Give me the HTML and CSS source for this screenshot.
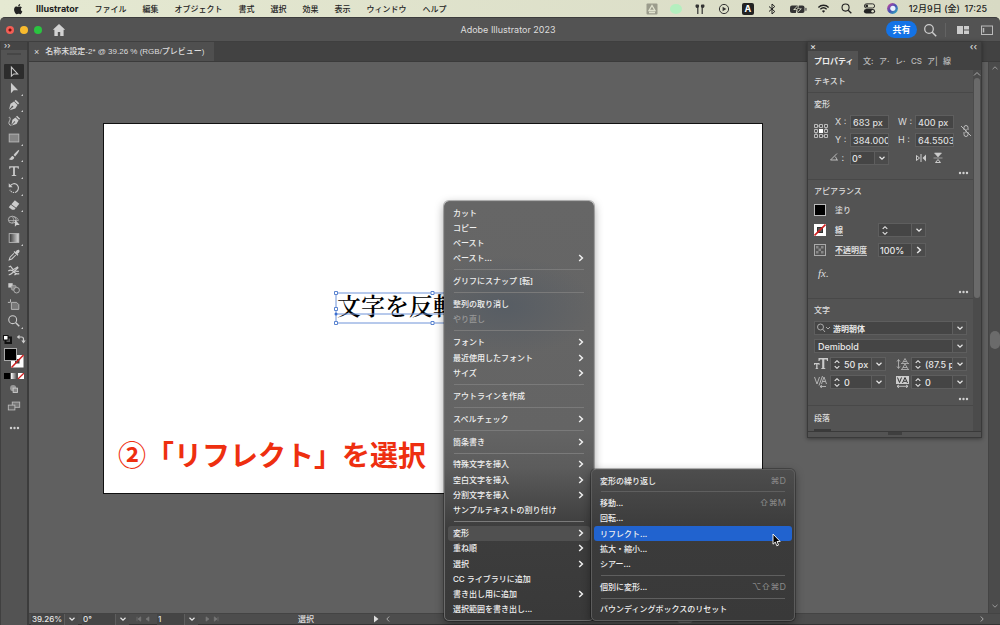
FILE: index.html
```html
<!DOCTYPE html>
<html lang="ja">
<head>
<meta charset="utf-8">
<title>Adobe Illustrator 2023</title>
<link rel="stylesheet" href="styles.css">
</head>
<body>
<svg class="defs" aria-hidden="true">
  <symbol id="chev-down" viewBox="0 0 8 8"><path d="M1.5 2.8 4 5.2 6.5 2.8" fill="none" stroke="currentColor" stroke-width="1.2"/></symbol>
  <symbol id="chev-right" viewBox="0 0 8 8"><path d="M2.2 1 5.4 4 2.2 7" fill="none" stroke="currentColor" stroke-width="1.5"/></symbol>
  <symbol id="stepper" viewBox="0 0 8 12"><path d="M1.5 4.2 4 1.8 6.5 4.2M1.5 7.8 4 10.2 6.5 7.8" fill="none" stroke="currentColor" stroke-width="1.2"/></symbol>
  <symbol id="dots" viewBox="0 0 12 4"><circle cx="2.2" cy="2" r="1.3" fill="currentColor"/><circle cx="6" cy="2" r="1.3" fill="currentColor"/><circle cx="9.8" cy="2" r="1.3" fill="currentColor"/></symbol>
</svg>

<header class="menubar">
  <nav class="menubar-items">
    <svg class="apple" viewBox="0 0 16 16"><path d="M11.8 8.4c0-1.6 1.3-2.3 1.4-2.4-.8-1.1-2-1.3-2.400-1.300-1-.1-2 .6-2.500.600s-1.300-.6-2.200-.6C4.900 4.700 3.900 5.400 3.300 6.300 2.100 8.400 3 11.500 4.200 13.200c.6.800 1.200 1.700 2.100 1.700s1.200-.5 2.200-.5 1.300.5 2.200.5 1.500-.8 2.100-1.700c.6-.900.9-1.800.9-1.900-.1 0-1.900-.7-1.900-2.900zM10.200 3.600c.5-.6.800-1.400.7-2.200-.7 0-1.500.5-2 1-.400.500-.800 1.300-.7 2.100.8.1 1.500-.4 2-.9z" fill="#222"/></svg>
    <a class="app-name" href="#">Illustrator</a>
    <a href="#">ファイル</a><a href="#">編集</a><a href="#">オブジェクト</a><a href="#">書式</a><a href="#">選択</a><a href="#">効果</a><a href="#">表示</a><a href="#">ウィンドウ</a><a href="#">ヘルプ</a>
  </nav>
  <div class="tray">
    <svg class="ic" viewBox="0 0 14 14"><rect x="1.500" y="1.500" width="11" height="11" rx="1" fill="#9b9c8c"/><path d="M7 3.500 10 8.500H4zM4 10.500h6" fill="none" stroke="#e1e3ce" stroke-width="1.300"/></svg>
    <svg class="ic" viewBox="0 0 14 14"><ellipse cx="7" cy="7" rx="6" ry="5" fill="#b4efbf"/></svg>
    <svg class="ic" viewBox="0 0 14 14"><path d="M3 2.500h2.300c1 0 1 3 .1 3.200V12H4.200V6C2.600 6 2 3.500 3 2.500zM11 2.500H8.700c-1 0-1 3-.1 3.200V12h1.200V6c1.600 0 2.200-2.500 1.200-3.500z" fill="#333"/></svg>
    <svg class="ic" viewBox="0 0 14 14"><circle cx="7" cy="7" r="4.600" fill="none" stroke="#333"/><path d="M5.600 4.700 9.300 7 5.600 9.300z" fill="#333"/></svg>
    <span class="ime">A</span>
    <svg class="ic" viewBox="0 0 14 14"><path d="M4 4.500 9.800 9.500 7 12V2L9.800 4.500 4 9.500" fill="none" stroke="#222"/></svg>
    <svg class="ic battery" viewBox="0 0 18 14"><rect x="1" y="3.500" width="14.500" height="7.500" rx="2" fill="#333"/><rect x="16.300" y="5.800" width="1.300" height="3" rx=".6" fill="#555"/><path d="M10 2 4 8h3.500l-1 4.500L13 6.500H9.300z" fill="#dfe1cc"/><path d="M9.200 3.800 5.800 7.200h3l-.8 3.500L11.200 7H8.200z" fill="#222"/></svg>
    <svg class="ic n" viewBox="0 0 14 14"><path d="M1.500 5.800c3-3 8-3 11 0M3.600 7.900c2-1.900 4.800-1.900 6.800 0" fill="none" stroke="#222" stroke-width="1.500"/><path d="M5.300 9.600c1-.9 2.400-.9 3.400 0L7 11.500z" fill="#222"/></svg>
    <svg class="ic n" viewBox="0 0 14 14"><circle cx="6" cy="6" r="3.800" fill="none" stroke="#222" stroke-width="1.200"/><path d="m8.800 8.800 3.400 3.400" stroke="#222" stroke-width="1.400"/></svg>
    <svg class="ic n" viewBox="0 0 14 14"><rect x="1.500" y="2" width="11" height="4.500" rx="2.250" fill="none" stroke="#222"/><circle cx="4" cy="4.200" r="1.500" fill="#222"/><rect x="1" y="7.500" width="12" height="5" rx="2.500" fill="#222"/><circle cx="10.400" cy="10" r="1.400" fill="#dfe1cc"/></svg>
    <svg class="ic n" viewBox="0 0 14 14"><defs><linearGradient id="siri" x1="0" y1="0" x2="1" y2="1"><stop offset="0" stop-color="#d9459a"/><stop offset=".5" stop-color="#4650b5"/><stop offset="1" stop-color="#2cc3c1"/></linearGradient></defs><circle cx="7" cy="7" r="5.800" fill="url(#siri)"/><circle cx="7.400" cy="6.800" r="2.800" fill="#e9f2ff"/></svg>
    <time>12月9日 (金)&nbsp; 17:25</time>
  </div>
</header>

<main class="window">
  <div class="titlebar">
    <div class="lights"><i class="red"></i><i class="yellow"></i><i class="green"></i></div>
    <button class="plain home" aria-label="ホーム"><svg viewBox="0 0 14 14"><path d="M7 1 .8 6.800h1.600V13h3.400V9h2.400v4h3.400V6.800h1.600z" fill="#d2d2d2"/></svg></button>
    <h1>Adobe Illustrator 2023</h1>
    <div class="title-tools">
      <button class="share">共有</button>
      <button class="plain" aria-label="検索"><svg class="ti" viewBox="0 0 14 14"><circle cx="6" cy="6" r="4.300" fill="none" stroke="#ccc" stroke-width="1.300"/><path d="m9.200 9.200 4 4" stroke="#ccc" stroke-width="1.500"/></svg></button>
      <i class="vr"></i>
      <button class="plain" aria-label="レイアウト"><svg class="ti" viewBox="0 0 14 14"><path d="M1 3h6v8H1zM8 3h5v3.500H8zM8 7.500h5V11H8z" fill="#ccc"/></svg></button>
      <button class="plain" aria-label="ワークスペース"><svg class="ti" viewBox="0 0 14 14"><rect x="1.500" y="3" width="11" height="8.500" fill="none" stroke="#bbb"/><path d="M3.500 5v4.500" stroke="#bbb" stroke-width="1.500"/></svg></button>
    </div>
  </div>

  <div class="workspace">
    <aside class="toolbar">
      <div class="tool-head">››</div>
      <i class="grip"></i>
      <div class="tools">
        <button class="tool active more" aria-label="選択"><svg viewBox="0 0 16 16"><path d="M5 2.500v10.200l2.800-2.500h4.400z" fill="none" stroke="#ccc" stroke-width="1.200"/></svg></button>
        <button class="tool more" aria-label="ダイレクト選択"><svg viewBox="0 0 16 16"><path d="M4.500 2v12l3.200-3.300h5z" fill="#ccc"/></svg></button>
        <button class="tool more" aria-label="ペン"><svg viewBox="0 0 16 16"><path d="m10 2 4 4-1.400 1.400-4-4zM8 4l4 4-2.500 4L3 14l3-3.200a1 1 0 1 0-.8-.8L2.300 13 4 6.500z" fill="#ccc"/></svg></button>
        <button class="tool" aria-label="曲線"><svg viewBox="0 0 16 16"><path d="m11.500 2 3.500 3.500-1.200 1.200-3.500-3.500zM9.700 4l3.500 3.500-2.400 3.800L5.500 13l3-3.200a.8.800 0 1 0-.7-.7L5 12.300 6.200 6.500z" fill="#ccc"/><path d="M2 4c2-1 2 2 .8 4S2 13 5 13" fill="none" stroke="#ccc"/></svg></button>
        <button class="tool more" aria-label="長方形"><svg viewBox="0 0 16 16"><rect x="2.500" y="3.500" width="11" height="9" fill="#858585" stroke="#bbb"/></svg></button>
        <button class="tool more" aria-label="ブラシ"><svg viewBox="0 0 16 16"><path d="M14 2c-2 .5-5 4-6.500 6l1.700 1.600C11.500 7.500 14 4 14 2zM6.500 9C4.500 9 4.500 12 2 12.500 4 14.500 8 14 8.300 10.500z" fill="#ccc"/></svg></button>
        <button class="tool more" aria-label="文字ツール"><svg viewBox="0 0 16 16"><path d="M2.500 2.500h11v3h-1l-.5-1.600H9v8.600l1.600.4v.8H5.400v-.8l1.600-.4V3.900H4L3.500 5.500h-1z" fill="#ccc"/></svg></button>
        <button class="tool more" aria-label="回転"><svg viewBox="0 0 16 16"><path d="M3.500 6c1.500-3.200 6-4 8.300-1.300s1.200 6-1.300 7.800" fill="none" stroke="#ccc" stroke-width="1.300"/><path d="M10.500 12.500c-3 1.600-6.500 0-7.200-2.500" fill="none" stroke="#ccc" stroke-width="1.200" stroke-dasharray="1.500 1"/><path d="M2 2.500v4.500h4.500z" fill="#ccc"/></svg></button>
        <button class="tool more" aria-label="消しゴム"><svg viewBox="0 0 16 16"><path d="m9 2.500 5 4-3.500 4.500-5.500-4z" fill="#ccc"/><path d="m4.300 7.700 5.500 4L8.500 13.500H5.800L2 10.500z" fill="#ccc"/></svg></button>
        <button class="tool" aria-label="シェイプ形成"><svg viewBox="0 0 16 16"><ellipse cx="6" cy="6.500" rx="4.500" ry="4" fill="none" stroke="#bbb"/><path d="M2 7.500h11c0-2-2-4-5-4M6 3c2 2 2 5 0 7.500" fill="none" stroke="#aaa"/><path d="M9 6v8.500l2-2h3.500z" fill="#ccc"/></svg></button>
        <button class="tool more" aria-label="グラデーション"><svg viewBox="0 0 16 16"><defs><linearGradient id="gt"><stop stop-color="#333"/><stop offset="1" stop-color="#ddd"/></linearGradient></defs><rect x="2.500" y="3" width="11" height="10" fill="url(#gt)" stroke="#bbb"/></svg></button>
        <button class="tool" aria-label="スポイト"><svg viewBox="0 0 16 16"><path d="M8 6 3.500 10.500 2.500 13.500l3-1L10 8" fill="none" stroke="#ccc" stroke-width="1.200"/><path d="m7.500 4.500 1-1 1.300 1C11 2.500 13 1.500 14 2.500s0 2.800-2 4l1 1.300-1 1z" fill="#ccc"/></svg></button>
        <button class="tool" aria-label="シンボルスプレー"><svg viewBox="0 0 16 16"><path d="M2 3.500 4 2.500l3 4 5-3 .5 1-4 3.500 5 .5M1.500 8c2-1.500 5-1 7 1.500s4 2 5.500 1.500M2 12c2 1 4-2 6-3.500M8.500 12.500 11 11" fill="none" stroke="#ccc" stroke-width="1.400"/></svg></button>
        <button class="tool" aria-label="ブレンド"><svg viewBox="0 0 16 16"><rect x="1.500" y="2.500" width="5" height="5" fill="#ccc"/><rect x="5" y="5" width="5.500" height="5.500" rx="2" fill="#888" stroke="#aaa"/><circle cx="11" cy="10.500" r="3.200" fill="#555" stroke="#bbb"/></svg></button>
        <button class="tool" aria-label="アートボード"><svg viewBox="0 0 16 16"><path d="M4 1.500v3M1 5h3" stroke="#ccc"/><path d="M5 5h6l2.500 2.500V13H5z" fill="#777" stroke="#bbb"/></svg></button>
        <button class="tool more" aria-label="ズーム"><svg viewBox="0 0 16 16"><circle cx="6.500" cy="6.500" r="4.500" fill="none" stroke="#ccc" stroke-width="1.200"/><path d="m10 10 4 4" stroke="#ccc" stroke-width="1.600"/></svg></button>
      </div>
      <div class="swap-row">
        <svg viewBox="0 0 10 10"><rect x="3.500" y="3.500" width="5.500" height="5.500" fill="none" stroke="#111" stroke-width="2"/><rect x="1.500" y="1.500" width="4.500" height="4.500" fill="#fff" stroke="#111"/></svg>
        <svg viewBox="0 0 10 10"><path d="M3 3h2.500c1.300 0 2 .7 2 2v2" fill="none" stroke="#ccc" stroke-width="1.200"/><path d="M3.500.8V5.200L.8 3zM5.300 6.500h4.400L7.500 9.500z" fill="#ccc"/></svg>
      </div>
      <svg class="fill-stroke" viewBox="0 0 22 22"><rect x="8" y="8" width="12.500" height="12.500" fill="#fff"/><rect x="12" y="12" width="4.500" height="4.500" fill="#444"/><path d="M8.500 20.500 20.500 8" stroke="#d02020" stroke-width="1.500"/><rect x="1.500" y="1.500" width="12" height="12" fill="#000" stroke="#aaa"/></svg>
      <svg class="modes" viewBox="0 0 20 6"><defs><linearGradient id="gm"><stop stop-color="#fff"/><stop offset="1" stop-color="#444"/></linearGradient></defs><rect width="6" height="6" fill="#000"/><rect x="7" width="6" height="6" fill="url(#gm)"/><rect x="14" width="6" height="6" fill="#fff"/><path d="m14 6 6-6" stroke="#d02020" stroke-width="1.300"/></svg>
      <svg class="mode-ic" viewBox="0 0 16 16"><circle cx="7" cy="7" r="3.500" fill="#999"/><rect x="7" y="7" width="5" height="5" fill="#888" stroke="#ccc"/></svg>
      <svg class="mode-ic wide" viewBox="0 0 16 16"><rect x="6" y="3.500" width="8.500" height="6" fill="#777" stroke="#bbb"/><rect x="1.500" y="7" width="7.500" height="5.500" fill="#666" stroke="#bbb"/></svg>
      <svg class="dots tool-dots"><use href="#dots"/></svg>
    </aside>

    <section class="document">
      <div class="tabs"><button class="doc-tab"><span>×</span>名称未設定-2* @ 39.26 % (RGB/プレビュー)</button></div>
      <div class="stage">
        <div class="canvas">
          <div class="artboard">
            <div class="text-object">文字を反転
              <svg class="selection" viewBox="0 0 194 34"><path d="M2 2h190v30H2zM2 23h190" fill="none" stroke="#6f93d8"/><g fill="#fff" stroke="#5b84d0"><path d="M.5.500h3v3h-3zM.5 16.500h3v3h-3zM.5 30.500h3v3h-3zM97 .5h3v3h-3zM97 30.500h3v3h-3z"/></g><circle cx="2" cy="23" r="1.500" fill="#3d6fd0"/></svg>
            </div>
            <p class="callout">②「リフレクト」を選択</p>
          </div>
        </div>
        <div class="vscroll"><svg viewBox="0 0 8 8"><path d="M1.500 5.200 4 2.800l2.500 2.400" fill="none" stroke="#999"/></svg><i></i><svg class="end" viewBox="0 0 8 8"><path d="M1.500 2.800 4 5.200l2.500-2.400" fill="none" stroke="#999"/></svg></div>
      </div>
      <footer class="status">
        <div class="combo zoom"><input aria-label="ズーム率" value="39.26%"><button aria-label="ズーム一覧"><svg><use href="#chev-down"/></svg></button></div>
        <div class="combo angle"><input aria-label="回転角" value="0°"><button aria-label="角度一覧"><svg><use href="#chev-down"/></svg></button></div>
        <svg class="nav" viewBox="0 0 20 8"><path d="M2 1v6M7 1v6L3 4zM18 1v6l-4-3z" fill="#777" stroke="#777" stroke-width=".8"/></svg>
        <div class="combo page"><input aria-label="ページ" value="1"><button aria-label="ページ一覧"><svg><use href="#chev-down"/></svg></button></div>
        <svg class="nav" viewBox="0 0 20 8"><path d="M2 1v6l4-3zM13 1v6l4-3zM18 1v6" fill="#777" stroke="#777" stroke-width=".8"/></svg>
        <span class="status-text">選択</span>
        <svg class="play" viewBox="0 0 8 8"><path d="M2 .5v7L6.500 4z" fill="#ddd"/></svg>
        <div class="hscroll"><svg viewBox="0 0 8 8"><path d="M5.200 1.500 2.800 4l2.400 2.500" fill="none" stroke="#aaa"/></svg><i></i><svg viewBox="0 0 8 8"><path d="M2.800 1.500 5.200 4 2.800 6.500" fill="none" stroke="#aaa"/></svg></div>
      </footer>
    </section>

    <aside class="panel">
      <div class="panel-head"><span>×</span><span>‹‹</span></div>
      <div class="panel-tabs"><button class="on">プロパティ</button><button aria-label="文字スタイル">文:</button><button aria-label="アセット">ア·</button><button aria-label="レイヤー">レ·</button><button aria-label="CSS">CS</button><button aria-label="アピアランス">ア|</button><button>線</button></div>
      <div class="panel-body">
        <div class="panel-content">
          <section class="kind"><h2>テキスト</h2></section>
          <section>
            <h2>変形</h2>
            <div class="transform">
              <svg class="refpt" viewBox="0 0 14 14"><g fill="none" stroke="#bbb"><path d="M2 2h10v10H2z" stroke-dasharray="1 1"/><path d="M.5.500h3v3h-3zM5.500.500h3v3h-3zM10.500.500h3v3h-3zM.5 5.500h3v3h-3zM10.500 5.500h3v3h-3zM.5 10.500h3v3h-3zM5.500 10.500h3v3h-3zM10.500 10.500h3v3h-3z" fill="#535353"/></g><path d="M5 5h4v4H5z" fill="#fff"/></svg>
              <label for="x">X :</label><input id="x" value="683 px"><label class="second" for="w">W :</label><input id="w" value="400 px">
              <svg class="link" viewBox="0 0 12 14"><path d="M4 6V3.500a2 2 0 0 1 4 0V6M4 8v2.500a2 2 0 0 0 4 0V8M6 5v4M1 2l10 10" fill="none" stroke="#bbb"/></svg>
              <label for="y">Y :</label><input id="y" value="384.000"><label class="second" for="h">H :</label><input id="h" value="64.5503">
              <label class="ang" for="r"><svg viewBox="0 0 12 10"><path d="M8 1.500 1.500 8H9M6 4.500q2 1.500 1.500 3.500" fill="none" stroke="#bbb"/></svg>:</label>
              <div class="combo rot"><input id="r" value="0°"><button aria-label="角度"><svg><use href="#chev-down"/></svg></button></div>
              <div class="flips"><svg viewBox="0 0 12 12"><path d="M1.500 3.500v5L4.500 6zM6 2v8" fill="none" stroke="#ccc"/><path d="M11 2.500v7L7.500 6z" fill="#ccc"/></svg><svg viewBox="0 0 12 12"><path d="M2.500 1h7L6 5zM1.500 6h9" fill="#ccc" stroke="#ccc" stroke-width=".6"/><path d="M3.500 10.500h5L6 7.500z" fill="none" stroke="#ccc"/></svg></div>
            </div>
            <svg class="dots"><use href="#dots"/></svg>
          </section>
          <section class="appearance">
            <h2>アピアランス</h2>
            <div class="ap-row"><svg viewBox="0 0 12 12"><rect x=".5" y=".5" width="11" height="11" fill="#000" stroke="#bbb"/></svg><span>塗り</span></div>
            <div class="ap-row"><svg viewBox="0 0 12 12"><rect width="12" height="12" fill="#fff"/><rect x="3.500" y="3.500" width="5" height="5" fill="#555" stroke="#333"/><path d="M.5 11.500 11.500.5" stroke="#d02020" stroke-width="1.600"/></svg><a href="#">線</a><div class="combo"><svg class="step"><use href="#stepper"/></svg><input aria-label="線幅" value=""><button aria-label="線幅一覧"><svg><use href="#chev-down"/></svg></button></div></div>
            <div class="ap-row"><svg viewBox="0 0 12 12"><rect x=".5" y=".5" width="11" height="11" fill="#555" stroke="#aaa"/><path d="M2 2h2.500v2.500H2zM7 2h2.500v2.500H7zM4.500 4.500H7V7H4.500zM2 7h2.500v2.500H2zM7 7h2.500v2.500H7z" fill="#888"/></svg><a href="#">不透明度</a><div class="combo"><input aria-label="不透明度" value="100%"><button aria-label="不透明度一覧"><svg><use href="#chev-right"/></svg></button></div></div>
            <div class="fx">fx.</div>
            <svg class="dots"><use href="#dots"/></svg>
          </section>
          <section class="character">
            <h2>文字</h2>
            <div class="char-row"><div class="combo wide"><svg class="search" viewBox="0 0 16 10"><circle cx="4.500" cy="4" r="3" fill="none" stroke="#aaa"/><path d="m6.500 6 2.500 3M10 4l2 2 2-2" fill="none" stroke="#aaa"/></svg><input class="bold" aria-label="フォント" value="游明朝体"><button aria-label="フォント一覧"><svg><use href="#chev-down"/></svg></button></div></div>
            <div class="char-row"><div class="combo wide"><input aria-label="スタイル" value="Demibold"><button aria-label="スタイル一覧"><svg><use href="#chev-down"/></svg></button></div></div>
            <div class="char-row quad">
              <svg viewBox="0 0 14 12"><path d="M4.500 0h9.500v3h-1L12.600 1.500H10.300V10l1 .3v.7H7.200v-.7l1-.3V1.500H5.900L5.500 3h-1zM0 5h5.500v2H4.800L4.600 6.200H3.500v4l.7.200v.6H1.500v-.6l.7-.2v-4H.9L.7 7H0z" fill="#ccc"/></svg>
              <div class="combo"><svg class="step"><use href="#stepper"/></svg><input aria-label="サイズ" value="50 px"><button aria-label="サイズ一覧"><svg><use href="#chev-down"/></svg></button></div>
              <svg class="third" viewBox="0 0 14 12"><path d="M2.500 2v8M1 3.500 2.500 1.500 4 3.500M1 8.500l1.500 2L4 8.500M6.500 5 9 .5 11.500 5M7.500 3.500h3M6 11l3-5 3 5M7 9.500h4M5 5.500h8M5 11.500h8" fill="none" stroke="#bbb" stroke-width=".8"/></svg>
              <div class="combo"><svg class="step"><use href="#stepper"/></svg><input aria-label="行送り" value="(87.5 p"><button aria-label="行送り一覧"><svg><use href="#chev-down"/></svg></button></div>
            </div>
            <div class="char-row quad">
              <svg viewBox="0 0 14 12"><path d="M.5 1l2.500 7L5.500 1M5 9.500 8.500 0M7.500 8 10 1l2.500 7M8.500 5.500h3M6 10.500h6M8 9l-2 1.500L8 12" fill="none" stroke="#bbb" stroke-width=".9"/></svg>
              <div class="combo"><svg class="step"><use href="#stepper"/></svg><input aria-label="カーニング" value="0"><button aria-label="カーニング一覧"><svg><use href="#chev-down"/></svg></button></div>
              <svg class="third" viewBox="0 0 14 12"><path d="M0 0h13v8H0z" fill="#ccc"/><path d="m1.500 1.500 2 5 2-5M6.500 7 9 1.500 11.500 7M7.500 5.300h3" fill="none" stroke="#333"/><path d="M1 10.300h11M3 9l-2 1.300L3 11.800M10 9l2 1.300-2 1.500" fill="none" stroke="#ccc" stroke-width=".9"/></svg>
              <div class="combo"><svg class="step"><use href="#stepper"/></svg><input aria-label="トラッキング" value="0"><button aria-label="トラッキング一覧"><svg><use href="#chev-down"/></svg></button></div>
            </div>
            <svg class="dots"><use href="#dots"/></svg>
          </section>
          <section class="para"><h2>段落</h2><i></i></section>
        </div>
        <div class="panel-scroll"><svg viewBox="0 0 8 8"><path d="M1 5.500 4 2.500l3 3" fill="none" stroke="#aaa"/></svg><i></i></div>
      </div>
      <div class="panel-foot"><i></i></div>
    </aside>
  </div>
</main>

<div class="menu main-menu" role="menu">
  <button>カット</button>
  <button>コピー</button>
  <button>ペースト</button>
  <button>ペースト...<svg><use href="#chev-right"/></svg></button>
  <hr>
  <button>グリフにスナップ [転]</button>
  <hr>
  <button>整列の取り消し</button>
  <button disabled>やり直し</button>
  <hr>
  <button>フォント<svg><use href="#chev-right"/></svg></button>
  <button>最近使用したフォント<svg><use href="#chev-right"/></svg></button>
  <button>サイズ<svg><use href="#chev-right"/></svg></button>
  <hr>
  <button>アウトラインを作成</button>
  <hr>
  <button>スペルチェック<svg><use href="#chev-right"/></svg></button>
  <hr>
  <button>箇条書き<svg><use href="#chev-right"/></svg></button>
  <hr>
  <button>特殊文字を挿入<svg><use href="#chev-right"/></svg></button>
  <button>空白文字を挿入<svg><use href="#chev-right"/></svg></button>
  <button>分割文字を挿入<svg><use href="#chev-right"/></svg></button>
  <button>サンプルテキストの割り付け</button>
  <hr>
  <button class="open">変形<svg><use href="#chev-right"/></svg></button>
  <button>重ね順<svg><use href="#chev-right"/></svg></button>
  <button>選択<svg><use href="#chev-right"/></svg></button>
  <button>CC ライブラリに追加</button>
  <button>書き出し用に追加<svg><use href="#chev-right"/></svg></button>
  <button>選択範囲を書き出し...</button>
</div>
<div class="menu sub-menu" role="menu">
  <button>変形の繰り返し<kbd>⌘D</kbd></button>
  <hr>
  <button>移動...<kbd>⇧⌘M</kbd></button>
  <button>回転...</button>
  <button class="chosen">リフレクト...</button>
  <button>拡大・縮小...</button>
  <button>シアー...</button>
  <hr>
  <button>個別に変形...<kbd>⌥⇧⌘D</kbd></button>
  <hr>
  <button>バウンディングボックスのリセット</button>
</div>
<svg class="cursor" viewBox="0 0 9 14"><path d="M1 1v10.200l2.300-2.100 1.500 3.700 1.700-.7L5 8.500h3.200z" fill="#000" stroke="#fff" stroke-width=".9"/></svg>
</body>
</html>
```
FILE: styles.css
```css
* { box-sizing: border-box; }
html, body { height: 100%; }
body {
  margin: 0;
  display: flex;
  flex-direction: column;
  overflow: hidden;
  background: #dfe1cc;
  color: #dedede;
  font: 500 8px/12px Inter, "Noto Sans CJK JP", sans-serif;
}
.defs { position: absolute; width: 0; height: 0; }
svg { display: block; flex: none; }
button, input { font: inherit; color: inherit; margin: 0; padding: 0; border: 0; background: none; min-width: 0; }
a { color: inherit; text-decoration: none; }
h1, h2, p { margin: 0; font-weight: 500; }

/* System menu bar */
.menubar {
  display: flex;
  justify-content: space-between;
  align-items: center;
  height: 17px;
  flex: none;
  padding: 0 13px 0 12px;
  background: linear-gradient(90deg, #e5e9d2, #d8dac4);
  color: #222;
}
.menubar-items { display: flex; align-items: center; gap: 16px; white-space: nowrap; }
.apple { width: 12px; height: 12px; margin-right: -4px; }
.app-name { font-weight: 700; font-size: 9px; }
.tray { display: flex; align-items: center; gap: 10px; }
.ic { width: 14px; height: 14px; }
.ic.n { width: 13px; height: 13px; }
.ic.battery { width: 18px; }
.ime { width: 12px; height: 12px; margin: 0 1px; border-radius: 2px; background: #222; color: #fff; text-align: center; font-weight: 700; font-size: 9px; }
.tray time { font-size: 9px; white-space: nowrap; }

/* Application frame */
.window {
  flex: 1;
  min-height: 0;
  display: flex;
  flex-direction: column;
  background: #535353;
  border-top: 1px solid #3c3c3c;
  border-radius: 5px 5px 0 0;
}
.titlebar { position: relative; display: flex; align-items: center; height: 23px; flex: none; padding: 0 6px; }
.lights { display: flex; gap: 6px; }
.lights i { width: 8px; height: 8px; border-radius: 50%; }
.lights .red { background: radial-gradient(circle, #7a0f0b 1px, #f35e55 2px); }
.lights .yellow { background: #f9bb2e; }
.lights .green { background: #2ac440; }
.home { margin-left: 10px; }
.home svg { width: 14px; height: 14px; }
.titlebar h1 { flex: 1; padding-left: 64px; text-align: center; font-size: 9px; font-weight: 400; }
.title-tools { display: flex; align-items: center; gap: 6px; }
.share { width: 31px; height: 17px; border-radius: 9px; background: #1473e6; color: #fff; font-size: 9px; font-weight: 700; }
.ti { width: 14px; height: 14px; }
.vr { width: 1px; height: 14px; background: #636363; margin: 0 4px 0 2px; }
.title-tools button:last-child { margin-left: 4px; }
.workspace { position: relative; flex: 1; min-height: 0; display: flex; border-top: 1px solid #3f3f3f; }

/* Tool strip */
.toolbar { width: 29px; flex: none; display: flex; flex-direction: column; align-items: center; border-right: 2px solid #3c3c3c; border-left: 1px solid #404040; }
.tool-head { align-self: stretch; height: 8px; padding-left: 3px; background: #454545; line-height: 6px; }
.grip { width: 14px; height: 2px; margin: 3px 0 9px; background: #464646; }
.tools { display: flex; flex-direction: column; justify-content: space-between; height: 265px; flex: none; }
.tool { position: relative; width: 20px; height: 15px; display: flex; justify-content: center; align-items: center; border-radius: 1px; }
.tool svg { width: 14px; height: 14px; }
.tool.active { background: #2c2c2c; }
.more:not(.active)::after { content: ""; position: absolute; right: 1px; bottom: 0; border: 1px solid #ccc; border-left-color: transparent; border-top-color: transparent; }
.swap-row { display: flex; justify-content: space-between; width: 24px; margin-top: 5px; }
.swap-row svg { width: 10px; height: 10px; }
.fill-stroke { width: 22px; height: 22px; margin-top: 3px; }
.modes { width: 20px; height: 6px; margin: 4px 0 1px; }
.mode-ic { width: 14px; height: 14px; margin-top: 2px; }
.mode-ic.wide { margin-top: 3px; }
.dots { width: 11px; height: 4px; color: #d0d0d0; }
.tool-dots { margin-top: 13px; }

/* Document area */
.document { flex: 1; min-width: 0; display: flex; flex-direction: column; }
.tabs { height: 20px; flex: none; display: flex; background: #424242; border-bottom: 1px solid #3b3b3b; }
.doc-tab { display: flex; align-items: center; padding: 0 9px 0 5px; background: #4f4f4f; font-family: "Liberation Sans", "Noto Sans CJK JP", sans-serif; font-weight: 500; white-space: nowrap; }
.doc-tab span { font-size: 9px; margin-right: 6px; }
.stage { flex: 1; min-height: 0; display: flex; }
.canvas { position: relative; flex: 1; background: #606060; overflow: hidden; }
.artboard { position: absolute; left: 74px; top: 61px; width: 660px; height: 371px; background: #fff; border: 1px solid #111; }
.text-object { position: absolute; left: 233px; top: 165px; color: #000; font: 600 24px/32px "Noto Serif CJK JP", "Noto Sans CJK JP", serif; white-space: nowrap; }
.selection { position: absolute; left: -3px; top: 2px; width: 194px; height: 34px; }
.callout { position: absolute; left: 14px; top: 310px; color: #ee2f10; font: 700 28px/40px "Noto Sans CJK JP", sans-serif; white-space: nowrap; }
.vscroll { width: 12px; display: flex; flex-direction: column; align-items: center; background: #4b4b4b; border-left: 1px solid #444; }
.vscroll svg { width: 8px; height: 8px; margin-top: 2px; }
.vscroll .end { margin: auto 0 3px; }
.vscroll i { width: 10px; height: 18px; margin-top: 259px; border-radius: 5px; background: #6b6b6b; }
.status { display: flex; align-items: center; height: 12px; flex: none; padding-left: 2px; background: #4d4d4d; border-top: 1px solid #444; border-bottom: 1px solid #333; }
.status .combo { height: 11px; font-size: 8px; border: 0; }
.status .zoom { width: 47px; }
.status .angle { width: 47px; margin-left: 4px; }
.status .page { width: 41px; }
.nav { width: 20px; height: 6px; margin: 0 4px; }
.status-text { width: 146px; padding-left: 14px; text-align: center; }
.play { width: 8px; height: 8px; }
.hscroll { flex: 1; display: flex; align-items: center; justify-content: space-between; margin-left: 4px; padding-right: 14px; }
.hscroll svg { width: 8px; height: 8px; }
.hscroll i { width: 16px; height: 8px; border-radius: 4px; background: #6b6b6b; }

/* Fields */
.combo { display: flex; align-items: center; height: 14px; border: 1px solid #5e5e5e; background: #454545; color: #e8e8e8; font-size: 9px; }
.combo input { flex: 1; width: 0; height: 100%; padding-left: 1px; }
.combo button { width: 14px; height: 100%; display: flex; align-items: center; justify-content: center; background: #4b4b4b; border-left: 1px solid #5e5e5e; }
.combo button svg { width: 8px; height: 8px; }
.step { width: 8px; height: 11px; margin: 0 2px; }

/* Properties panel */
.panel { position: absolute; top: -1px; right: 18px; width: 175px; display: flex; flex-direction: column; background: #535353; border: 1px solid #3a3a3a; box-shadow: 0 1px 4px rgba(0, 0, 0, .4); }
.panel-head { display: flex; justify-content: space-between; height: 9px; padding: 0 4px 0 2px; background: #424242; font-size: 9px; line-height: 9px; }
.panel-tabs { display: flex; height: 19px; background: #424242; }
.panel-tabs button { flex: none; width: 16px; padding: 0 0 0 5px; overflow: hidden; white-space: nowrap; text-align: left; color: #bbb; font-weight: 500; }
.panel-tabs button.on { width: 50px; padding-left: 6px; background: #535353; color: #eee; font-weight: 700; }
.panel-body { display: flex; }
.panel-content { flex: 1; min-width: 0; }
.panel-content section { display: flex; flex-direction: column; padding: 3px 1px 0 6px; border-bottom: 1px solid #484848; }
.panel h2 { font-size: 8px; line-height: 17px; }
.panel .kind { padding-bottom: 2px; }
.panel section > .dots { align-self: flex-end; margin: 4px 3px 4px 0; }
.panel-content .character > .dots { margin-top: 6px; }
.panel-scroll { width: 8px; display: flex; flex-direction: column; align-items: center; background: #4b4b4b; }
.panel-scroll svg { width: 8px; height: 8px; }
.panel-scroll i { width: 6px; height: 220px; border-radius: 3px; background: #6a6a6a; }
.transform { display: grid; grid-template-columns: 21px 15px 39px 9px 17px 39px 1fr; grid-auto-rows: 18px; align-items: center; }
.transform label { grid-column: 2; font-size: 9px; font-weight: 400; }
.transform label.second { grid-column: 5; }
.transform > input { width: 100%; height: 14px; padding: 0 0 0 2px; border: 1px solid #5e5e5e; background: #454545; font-size: 9px; }
.refpt { grid-row: 1 / 3; width: 14px; height: 14px; }
.link { grid-column: 7; grid-row: 1 / 3; width: 12px; height: 14px; justify-self: end; }
.transform .ang { grid-column: 1 / 3; display: flex; justify-content: flex-end; padding-right: 6px; }
.ang svg { width: 12px; height: 10px; }
.rot { grid-column: 3; }
.flips { grid-column: 5 / 8; display: flex; gap: 5px; padding-left: 17px; }
.flips svg { width: 12px; height: 12px; }
.ap-row { display: grid; grid-template-columns: 21px 43px 48px; align-items: center; height: 20px; font-weight: 500; }
.ap-row > svg { width: 12px; height: 12px; }
.ap-row > a { justify-self: start; font-weight: 700; line-height: 10px; border-bottom: 1px solid #bbb; }
.fx { height: 26px; padding-left: 4px; font: italic 11px/26px "Liberation Serif", serif; }
.char-row { display: flex; align-items: center; height: 18px; }
.char-row .wide { width: 153px; }
.wide > input:first-child { padding-left: 3px; }
.wide .search { width: 16px; height: 10px; margin-left: 1px; }
.wide .bold { font-weight: 700; font-size: 8px; }
.quad { display: grid; grid-template-columns: 16px 56px 10px 15px 56px; }
.quad > svg { width: 14px; height: 12px; }
.quad .third { grid-column: 4; }
.panel-content .para { padding-top: 4px; border: 0; }
.para i { width: 17px; height: 2px; margin-top: 2px; background: #3a3a3a; }
.panel-foot { height: 6px; display: flex; justify-content: center; border-top: 1px solid #3a3a3a; }
.panel-foot i { width: 14px; height: 3px; background: #3f3f3f; }

/* Context menus */
.menu { position: absolute; bottom: 4px; display: flex; flex-direction: column; padding: 3px; border: 1px solid #6c6c6c; border-radius: 5px; color: #f0f0f0; box-shadow: 0 3px 10px rgba(0, 0, 0, .4), 0 0 0 1px rgba(0, 0, 0, .25); }
.main-menu { left: 444px; top: 201px; width: 150px; background: radial-gradient(90px 50px at 60px 104px, #575d64, rgba(87, 93, 100, 0)), linear-gradient(#666 0, #646464 230px, #5c5c5c 265px, #3d3d3d 325px, #393939); }
.sub-menu { left: 591px; top: 469px; width: 204px; border-color: #5c5c5c; background: linear-gradient(#4d4d4d, #3b3b3b 60px, #393939); }
.menu button { flex: 2 1 0; min-height: 0; display: flex; align-items: center; justify-content: space-between; padding: 0 5px; border-radius: 3px; text-align: left; white-space: nowrap; }
.menu button:disabled { color: #999; }
.menu button svg { width: 8px; height: 8px; }
.menu hr { flex: 1 1 0; width: calc(100% - 12px); margin: 0 auto; border: 0; background: linear-gradient(#7a7a7a, #7a7a7a) center / 100% 1px no-repeat; }
.sub-menu hr { background-image: linear-gradient(#5f5f5f, #5f5f5f); }
.menu .open { background: #505050; }
.menu .chosen { margin: 0 -1px; padding: 0 6px; background: #2163cf; }
.menu kbd { font: 9px/12px Inter, "DejaVu Sans", sans-serif; color: #888; }
.cursor { position: absolute; left: 772px; top: 533px; width: 9px; height: 14px; }
```
